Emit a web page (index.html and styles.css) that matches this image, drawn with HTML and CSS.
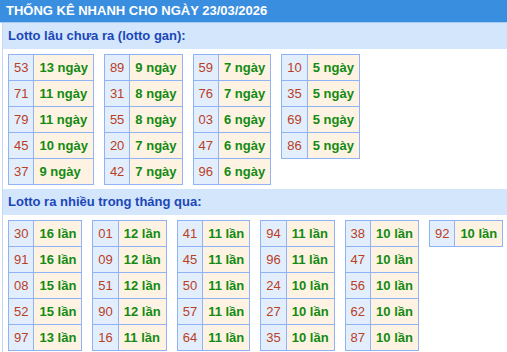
FILE: index.html
```html
<!DOCTYPE html>
<html lang="vi">
<head>
<meta charset="utf-8">
<title>Thống kê nhanh</title>
<link rel="stylesheet" href="styles.css">
</head>
<body>
<div class="header">THỐNG KÊ NHANH CHO NGÀY 23/03/2026</div>
<div class="box">
  <div class="bar">Lotto lâu chưa ra (lotto gan):</div>
  <div class="tables">
    <table class="tbl">
      <tr><td class="num">53</td><td class="cnt">13 ngày</td></tr>
      <tr><td class="num">71</td><td class="cnt">11 ngày</td></tr>
      <tr><td class="num">79</td><td class="cnt">11 ngày</td></tr>
      <tr><td class="num">45</td><td class="cnt">10 ngày</td></tr>
      <tr><td class="num">37</td><td class="cnt">9 ngày</td></tr>
    </table>
    <table class="tbl">
      <tr><td class="num">89</td><td class="cnt">9 ngày</td></tr>
      <tr><td class="num">31</td><td class="cnt">8 ngày</td></tr>
      <tr><td class="num">55</td><td class="cnt">8 ngày</td></tr>
      <tr><td class="num">20</td><td class="cnt">7 ngày</td></tr>
      <tr><td class="num">42</td><td class="cnt">7 ngày</td></tr>
    </table>
    <table class="tbl">
      <tr><td class="num">59</td><td class="cnt">7 ngày</td></tr>
      <tr><td class="num">76</td><td class="cnt">7 ngày</td></tr>
      <tr><td class="num">03</td><td class="cnt">6 ngày</td></tr>
      <tr><td class="num">47</td><td class="cnt">6 ngày</td></tr>
      <tr><td class="num">96</td><td class="cnt">6 ngày</td></tr>
    </table>
    <table class="tbl">
      <tr><td class="num">10</td><td class="cnt">5 ngày</td></tr>
      <tr><td class="num">35</td><td class="cnt">5 ngày</td></tr>
      <tr><td class="num">69</td><td class="cnt">5 ngày</td></tr>
      <tr><td class="num">86</td><td class="cnt">5 ngày</td></tr>
    </table>
  </div>
  <div class="bar">Lotto ra nhiều trong tháng qua:</div>
  <div class="tables">
    <table class="tbl">
      <tr><td class="num">30</td><td class="cnt">16 lần</td></tr>
      <tr><td class="num">91</td><td class="cnt">16 lần</td></tr>
      <tr><td class="num">08</td><td class="cnt">15 lần</td></tr>
      <tr><td class="num">52</td><td class="cnt">15 lần</td></tr>
      <tr><td class="num">97</td><td class="cnt">13 lần</td></tr>
    </table>
    <table class="tbl">
      <tr><td class="num">01</td><td class="cnt">12 lần</td></tr>
      <tr><td class="num">09</td><td class="cnt">12 lần</td></tr>
      <tr><td class="num">51</td><td class="cnt">12 lần</td></tr>
      <tr><td class="num">90</td><td class="cnt">12 lần</td></tr>
      <tr><td class="num">16</td><td class="cnt">11 lần</td></tr>
    </table>
    <table class="tbl">
      <tr><td class="num">41</td><td class="cnt">11 lần</td></tr>
      <tr><td class="num">45</td><td class="cnt">11 lần</td></tr>
      <tr><td class="num">50</td><td class="cnt">11 lần</td></tr>
      <tr><td class="num">57</td><td class="cnt">11 lần</td></tr>
      <tr><td class="num">64</td><td class="cnt">11 lần</td></tr>
    </table>
    <table class="tbl">
      <tr><td class="num">94</td><td class="cnt">11 lần</td></tr>
      <tr><td class="num">96</td><td class="cnt">11 lần</td></tr>
      <tr><td class="num">24</td><td class="cnt">10 lần</td></tr>
      <tr><td class="num">27</td><td class="cnt">10 lần</td></tr>
      <tr><td class="num">35</td><td class="cnt">10 lần</td></tr>
    </table>
    <table class="tbl">
      <tr><td class="num">38</td><td class="cnt">10 lần</td></tr>
      <tr><td class="num">47</td><td class="cnt">10 lần</td></tr>
      <tr><td class="num">56</td><td class="cnt">10 lần</td></tr>
      <tr><td class="num">62</td><td class="cnt">10 lần</td></tr>
      <tr><td class="num">87</td><td class="cnt">10 lần</td></tr>
    </table>
    <table class="tbl">
      <tr><td class="num">92</td><td class="cnt">10 lần</td></tr>
    </table>
  </div>
</div>
</body>
</html>
```

FILE: styles.css
```css
html, body {
  margin: 0;
  padding: 0;
  background: #ffffff;
  font-family: "Liberation Sans", Arial, sans-serif;
  font-size: 13px;
}

.header {
  height: 22px;
  line-height: 22px;
  background: #3a8ee0;
  color: #ffffff;
  font-weight: bold;
  padding-left: 6px;
  border-bottom: 1px solid #a8cbf2;
  white-space: nowrap;
}

.box {
  margin-left: 2px;
  border-left: 1px solid #c3d8f3;
}

.bar {
  height: 26px;
  line-height: 26px;
  background: #d3e6fb;
  color: #1b47b9;
  font-weight: bold;
  padding-left: 5px;
}

.tables {
  display: flex;
  flex-wrap: wrap;
  align-items: flex-start;
  gap: 10px;
  padding: 5px 0 4px 5px;
}

.tbl {
  border-collapse: collapse;
}

.tbl td {
  border: 1px solid #8fb3f5;
  padding: 5px;
  line-height: 15px;
  white-space: nowrap;
}

.num {
  background: #e3eefd;
  color: #b8401f;
  text-align: center;
}

.cnt {
  background: #fef3e2;
  color: #138a13;
  font-weight: bold;
  text-align: left;
}
```
